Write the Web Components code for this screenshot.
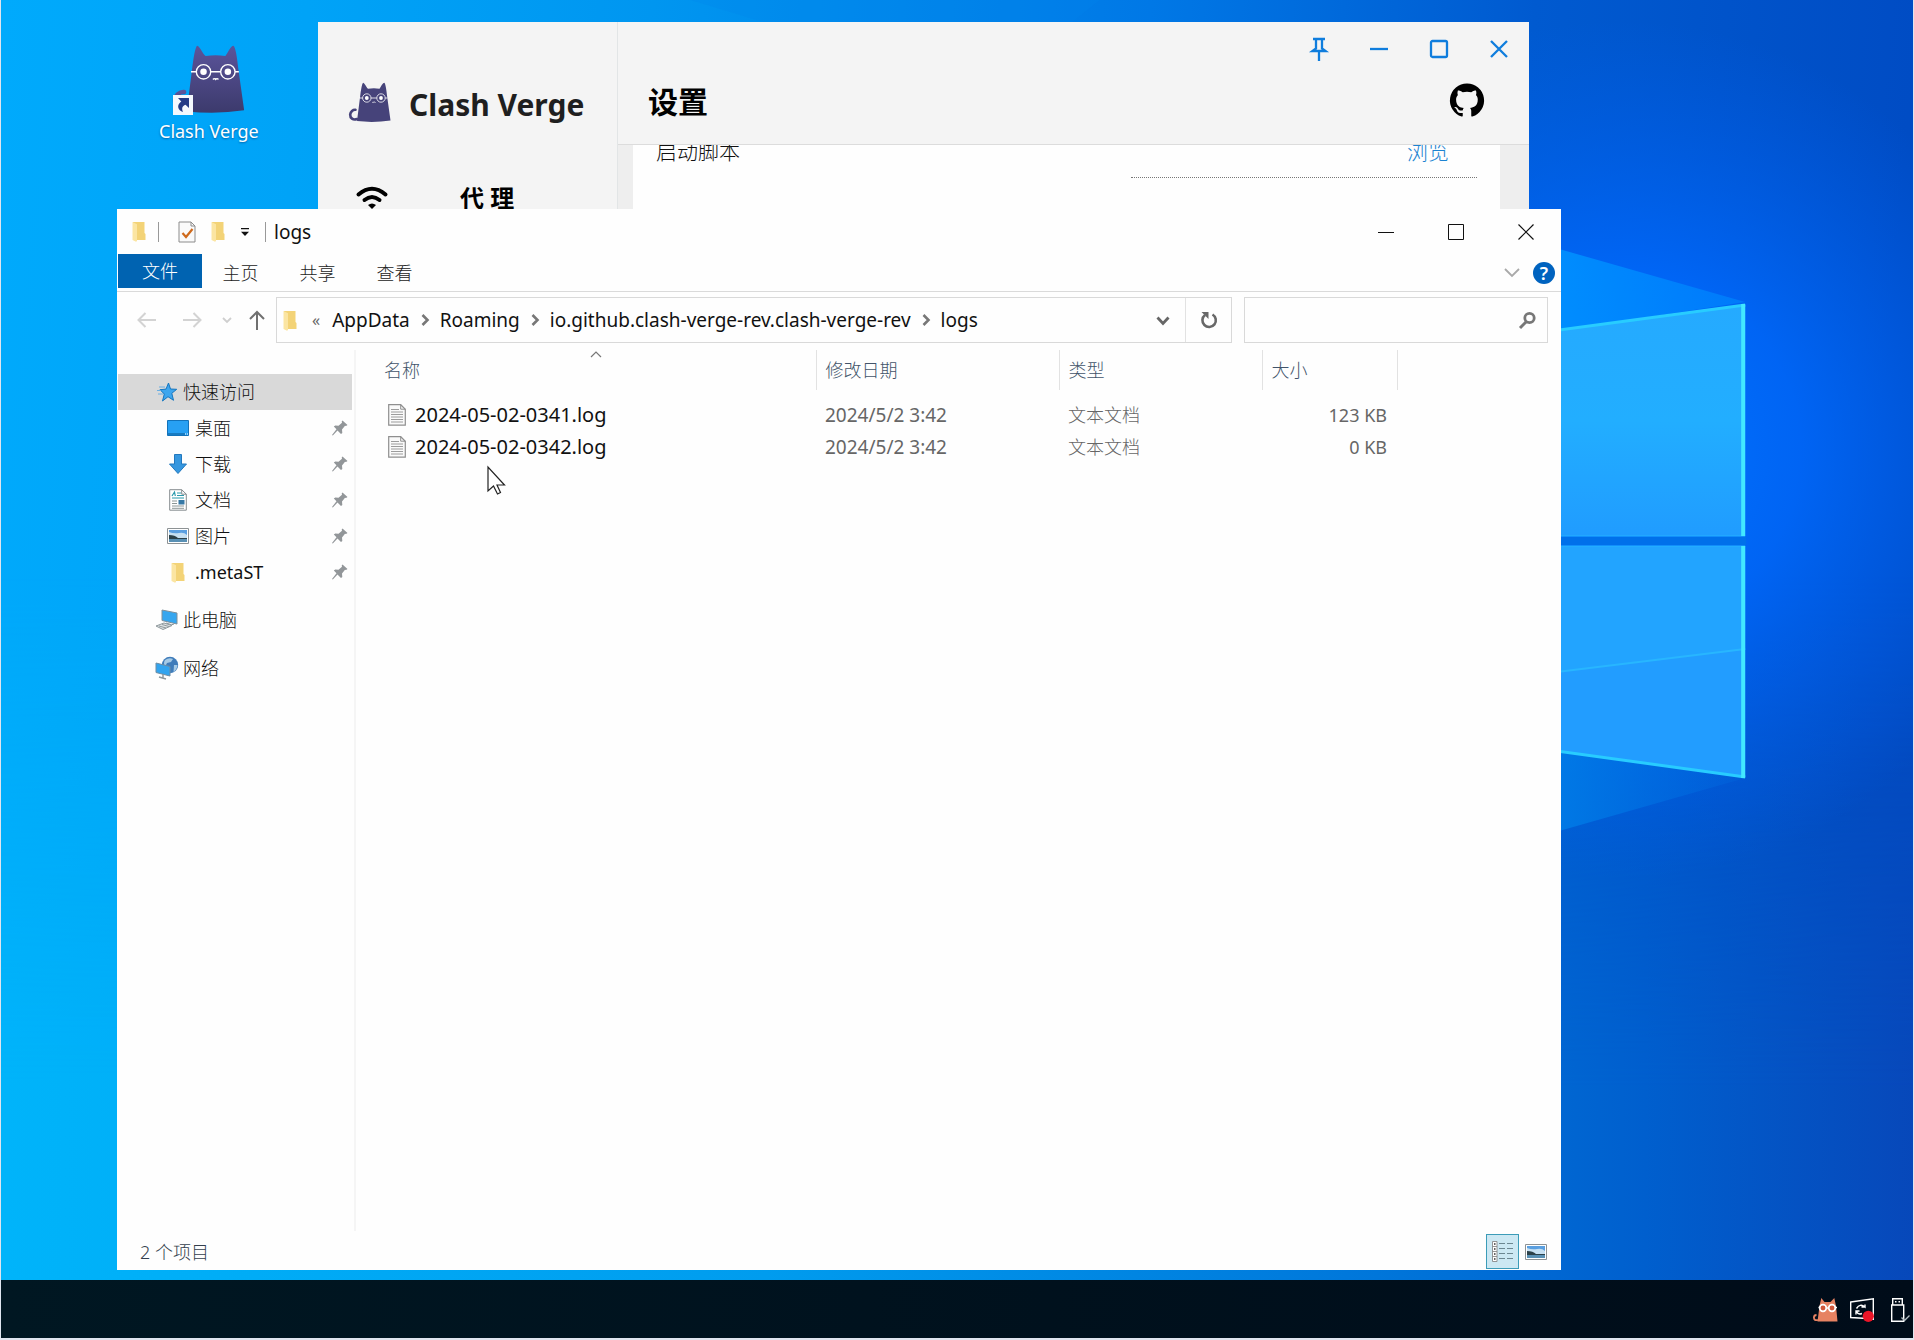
<!DOCTYPE html>
<html lang="zh-CN">
<head>
<meta charset="utf-8">
<meta name="viewport" content="width=device-width, initial-scale=1">
<title>logs</title>
<style>
  html, body { margin: 0; height: 100%; }
  body {
    font-family: "Noto Sans", "Noto Sans CJK SC", sans-serif;
    font-size: 18px;
    line-height: 24px;
    color: #111;
    overflow: hidden;
  }
</style>
</head>
<body>
<desk-top>
  <desktop-shortcut slot="icons" label="Clash Verge"></desktop-shortcut>
  <clash-window slot="back"></clash-window>
  <explorer-window slot="front" title-text="logs"></explorer-window>
</desk-top>

<script>
const CAT = (body, extra = "") => `<svg viewBox="0 0 42 40">${extra}
  <path d="M8 36.500C4 38 1 35.500 1.200 32 1.500 29 4 27 6.500 27.300" fill="none" stroke="${body}" stroke-width="2.600" stroke-linecap="round"/>
  <path d="M14 .3C15.600.3 17 4.500 19 6.300Q25 5.400 30.500 6.300C32 4.500 33.500.3 35.300.3 36.500 1 37.500 8 38 13L41.500 38Q25 40.500 8 38.600L11 15Q12.500 2 14 .3Z" fill="${body}"/>
  <g fill="none" stroke="#fff" stroke-width=".8"><circle cx="17.800" cy="15.500" r="4.200"/><circle cx="32" cy="15.500" r="4.200"/><path d="M10.500 15.500h3M22 15.500h5.800M36.200 15.500h2.200M23.300 20q.8-1 1.600 0 .8-1 1.600 0"/></g>
  <g fill="#fff"><circle cx="17.800" cy="15.500" r="1.900"/><circle cx="32" cy="15.500" r="1.900"/></g></svg>`;

const PICTURE = `<svg viewBox="0 0 22 16"><path d="M.5.500h21v15H.5z" fill="#fff" stroke="#8d9294"/><path d="M2 2h18v12H2z" fill="#5a9fe0"/><path d="M2 4q5 2 10 1t8 2v3H2z" fill="#c6e0f2"/><path d="M2 7q6 0 9 3h9v1H2z" fill="#2c4149"/><path d="M2 11h18v3H2z" fill="#5990b4"/></svg>`;

const ICONS = {
  cat: CAT("#46437a"),
  catOrange: `<svg viewBox="0 0 25 24"><path d="M5 22Q1 23 .9 19.500 1 17 3.500 17" fill="none" stroke="#e68262" stroke-width="1.800"/><path d="M8.300 0L11.500 4h6L21.300 0 23 8l1.500 15.500H4.500L6.500 8z" fill="#e68262"/><g fill="#d0563a" stroke="#fff" stroke-width="1.700"><circle cx="10" cy="10" r="3.300"/><circle cx="19" cy="10" r="3.300"/></g><path d="M13.300 10h2.400M5.500 9.500h1.500M22 9.500h2" stroke="#fff" stroke-width="1.500"/></svg>`,
  catDesktop: CAT("url(#fur)", `<linearGradient id="fur" x2="0" y2="1"><stop stop-color="#5b549b"/><stop offset="1" stop-color="#3c3a6c"/></linearGradient>`),
  shortcut: `<svg viewBox="0 0 20 20"><path d="M0 0h20v20H0z" fill="#f4f8fd"/><path d="M5 3h11v10l-3.500-3.200C9 11 8.500 13.500 10 17 5 15.500 3 10 8.300 6.500z" fill="#243b86"/></svg>`,
  folder: `<svg viewBox="0 0 14 21"><path d="M1 1h11.500v11l1 1v6H1z" fill="#f3d377"/><path d="M.5 1L5 3.200V20l-1 .8L.5 19z" fill="#fbe5a2"/></svg>`,
  check: `<svg viewBox="0 0 18 22"><path d="M1 1h12l4 4v16H1z" fill="#fafafa" stroke="#8c8c8c"/><path d="M13 1v4h4" fill="none" stroke="#8c8c8c"/><path d="M4.500 12l3.500 4 6.500-8" fill="none" stroke="#cf6a1c" stroke-width="2.200"/></svg>`,
  customize: `<svg viewBox="0 0 10 8"><path d="M1 0h8v1.300H1zM1 3.800h8L5 8z" fill="#111"/></svg>`,
  minimize: `<svg viewBox="0 0 16 16"><path d="M0 8.500h16" stroke="#111"/></svg>`,
  maximize: `<svg viewBox="0 0 16 16"><path d="M.5.500h15v15H.5z" fill="none" stroke="#111"/></svg>`,
  close: `<svg viewBox="0 0 16 16"><path d="M.5.500l15 15M15.500.500l-15 15" stroke="#111" stroke-width="1.200"/></svg>`,
  pinBlue: `<svg viewBox="0 0 18 24"><path d="M3 2h12M6 2v9.500L2.500 14h13L12 11.500V2M9 14.500V24" fill="none" stroke="#0f7ddd" stroke-width="2.300"/></svg>`,
  minBlue: `<svg viewBox="0 0 18 18"><path d="M0 9h18" stroke="#0f7ddd" stroke-width="2.300"/></svg>`,
  maxBlue: `<svg viewBox="0 0 18 18"><rect x="1" y="1" width="16" height="16" rx="1.500" fill="none" stroke="#0f7ddd" stroke-width="2.300"/></svg>`,
  closeBlue: `<svg viewBox="0 0 18 18"><path d="M1 1l16 16M17 1L1 17" stroke="#0f7ddd" stroke-width="2.300"/></svg>`,
  github: `<svg viewBox="0 0 24 24"><path d="M12 .3a12 12 0 0 0-3.800 23.400c.6.1.8-.3.8-.6v-2c-3.300.7-4-1.600-4-1.600-.6-1.400-1.400-1.800-1.400-1.800-1-.7.1-.7.1-.7 1.200 0 1.900 1.200 1.900 1.200 1 1.800 2.800 1.300 3.500 1 0-.8.400-1.300.7-1.600-2.700-.3-5.500-1.300-5.500-6 0-1.200.5-2.300 1.300-3.100-.2-.4-.6-1.600 0-3.200 0 0 1-.3 3.400 1.200a11.500 11.500 0 0 1 6 0c2.300-1.500 3.300-1.200 3.300-1.200.6 1.600.2 2.800 0 3.200.9.800 1.300 1.900 1.300 3.200 0 4.600-2.800 5.600-5.500 5.900.5.400.9 1 .9 2.200v3.300c0 .3.100.7.8.6A12 12 0 0 0 12 .3" fill="#000"/></svg>`,
  wifi: `<svg viewBox="0 0 32 24"><g fill="none" stroke="#000" stroke-width="4" stroke-linecap="round"><path d="M2.500 8.500Q16-3 29.500 8.500"/><path d="M8.500 14Q16 8 23.500 14"/></g><path d="M12 19q4-3 8 0l-4 4z"/></svg>`,
  back: `<svg viewBox="0 0 20 16"><path d="M19 8H2M8.500 1L1.500 8l7 7" fill="none" stroke="#d3d3d3" stroke-width="2"/></svg>`,
  forward: `<svg viewBox="0 0 20 16"><path d="M1 8h17M11.500 1l7 7-7 7" fill="none" stroke="#d3d3d3" stroke-width="2"/></svg>`,
  recent: `<svg viewBox="0 0 10 6"><path d="M1 1l4 4 4-4" fill="none" stroke="#cfcfcf" stroke-width="1.800"/></svg>`,
  up: `<svg viewBox="0 0 16 20"><path d="M8 20V2M1 9l7-7 7 7" fill="none" stroke="#707070" stroke-width="2"/></svg>`,
  crumb: `<svg viewBox="0 0 8 12"><path d="M1.500 1l5 5-5 5" fill="none" stroke="#777" stroke-width="2.600"/></svg>`,
  drop: `<svg viewBox="0 0 14 9"><path d="M1.500 1.500L7 7.500l5.500-6" fill="none" stroke="#666" stroke-width="2.800"/></svg>`,
  refresh: `<svg viewBox="0 0 18 18"><path d="M12.500 3.500A6.700 6.700 0 1 1 5 4" fill="none" stroke="#686868" stroke-width="2.600"/><path d="M1.500 1h7v7z" fill="#686868"/></svg>`,
  search: `<svg viewBox="0 0 17 17"><circle cx="10.500" cy="6" r="4.700" fill="none" stroke="#777" stroke-width="2.800"/><path d="M7.500 9.500L1 16" stroke="#777" stroke-width="3"/></svg>`,
  expand: `<svg viewBox="0 0 16 9"><path d="M1 1l7 7 7-7" fill="none" stroke="#a9a9a9" stroke-width="1.800"/></svg>`,
  sort: `<svg viewBox="0 0 12 7"><path d="M1 6l5-5 5 5" fill="none" stroke="#777" stroke-width="1.200"/></svg>`,
  star: `<svg viewBox="0 0 20 20"><path d="M11.500 1l2 6 6.200.3-4.900 4 1.700 7-5.500-3.600L5.500 19l1.800-7L3 7.700l6-.6z" fill="#3ea6ee" stroke="#1576bf"/><path d="M2 5h6M0 8.500h4M1 12h5" stroke="#6aaee2"/></svg>`,
  desktop: `<svg viewBox="0 0 22 16"><path d="M.5.500h21v15H.5z" fill="#27a0f3" stroke="#1272ba"/><path d="M1 14h17" stroke="#0b568f"/><path d="M18 14h3" stroke="#fff" stroke-dasharray="1 1"/></svg>`,
  download: `<svg viewBox="0 0 18 20"><path d="M5.500.500h7v9.500h5L9 19.500.5 10h5z" fill="#3697df" stroke="#2278be"/></svg>`,
  document: `<svg viewBox="0 0 18 22"><path d="M.7.700h12l4.600 4.500v16H.7z" fill="#fff" stroke="#858c8f"/><path d="M12.700.700v4.500h4.600" fill="none" stroke="#858c8f"/><path d="M3 7l2.500-4 .8 4M8 4h4M8 6.500h7M3 9h12" fill="none" stroke="#2a99ac" stroke-width="1.200"/><path d="M3 12h5M3 14.500h5M3 17h12M3 19.300h12" stroke="#8c9696"/><path d="M9.500 11h6v4.500h-6z" fill="#3679a6"/></svg>`,
  picture: PICTURE,
  pc: `<svg viewBox="0 0 24 22"><path d="M7 1l15 3v11L7 11.500z" fill="#36a6ef" stroke="#80909a"/><path d="M11 14l5 1.500M13 17l6-2" stroke="#87949b"/><path d="M1 17l8-3 8 2.500-9 4z" fill="#dfe3e4" stroke="#8f999d"/><path d="M4 17l7 2M7 15.500l7 2" stroke="#8f999d"/></svg>`,
  network: `<svg viewBox="0 0 24 24"><circle cx="15" cy="9" r="8.200" fill="#3f7cba"/><path d="M10 4q4-3 8-1l-2 3-4 1-2 4q-2-4 0-7M19 9l3.500 0q-.5 5-4 7z" fill="#a5cae6"/><path d="M1 7l14 3.500V20L1 16.500z" fill="#32a4ef" stroke="#6c8da5"/><path d="M8 18v4M4 21l7 2" stroke="#8d989d" stroke-width="1.500"/></svg>`,
  pin: `<svg viewBox="0 0 16 16"><path d="M10.500.5l5 4.500-1.500 1-1-.3-3 3.800.3 3.500-1.300 1-3.500-3.500L.8 15.500 0 15l4.500-5.800L1.800 6.500l1.500-1 3.200.2 3.500-3-.3-1.200z" fill="#929699"/></svg>`,
  log: `<svg viewBox="0 0 18 22"><path d="M.7.700h12l4.600 4.500v16H.7z" fill="#fafafa" stroke="#8f8f8f" stroke-width="1.200"/><path d="M12.700.700v4.500h4.600" fill="none" stroke="#8f8f8f"/><path d="M3 5.500h8M3 8h12M3 10.500h12M3 13h12M3 15.500h12M3 18h12" stroke="#9c9c9c"/></svg>`,
  details: `<svg viewBox="0 0 21 21"><g fill="#fff" stroke="#888" stroke-width=".9"><path d="M.5.500h4.500v20H.5zM.5 5.500H5M.5 10.500H5M.5 15.500H5"/></g><path d="M2 3h1.500M2 8h1.500M2 13h1.500M2 18h1.500" stroke="#333" stroke-width="1.500"/><path d="M7 2.500h6M15 2.500h6M7 7.500h6M15 7.500h6M7 12.500h6M15 12.500h6M7 17.500h6M15 17.500h6" stroke="#6c8791"/></svg>`,
  update: `<svg viewBox="0 0 24 24"><path d="M.7 4L23.300.8v20.500L13 20.200.7 19.500z" fill="none" stroke="#fff" stroke-width="1.400"/><path d="M6.500 10.500Q10 5 15 9V6.500M15 9h-3.500M6 16.500V13h3.500M6.500 13.500Q8 17 12 15.500" fill="none" stroke="#fff" stroke-width="1.400"/><circle cx="18.300" cy="18.300" r="5.600" fill="#ea1528"/></svg>`,
  usb: `<svg viewBox="0 0 19 24"><path d="M1.700 7V.7h9.600V7M.7 7h12v16.300H.7z" fill="none" stroke="#fff" stroke-width="1.400"/><path d="M4 3.800h1.500M7.500 3.800H9" stroke="#fff" stroke-width="1.500"/><path d="M10.500 19.500l3 3L18.500 17.500" fill="none" stroke="#b3bdc2" stroke-width="1.400"/></svg>`,
  cursor: `<svg viewBox="0 0 19 29"><path d="M1 1v24l5.500-5 4 8 3-1.500-3.500-7.500H17.500z" fill="#fff" stroke="#222" stroke-width="1.200"/></svg>`
};

// <ui-icon name="folder" w="14" h="21">
class UiIcon extends HTMLElement {
  constructor() {
    super();
    this.attachShadow({ mode: "open" });
  }

  connectedCallback() {
    const w = this.getAttribute("w") || 16;
    const h = this.getAttribute("h") || w;
    this.shadowRoot.innerHTML = `
      <style>
        :host { display: inline-flex; flex: none; }
        svg { display: block; width: ${w}px; height: ${h}px; overflow: visible; }
      </style>
      ${ICONS[this.getAttribute("name")]}
    `;
    this.setAttribute("aria-hidden", "true");
  }
}
customElements.define("ui-icon", UiIcon);

class WallPaper extends HTMLElement {
  constructor() {
    super();
    this.attachShadow({ mode: "open" }).innerHTML = `
      <style>
        :host { display: block; }
        svg { display: block; width: 100%; height: 100%; }
      </style>
      <svg viewBox="0 0 1914 1280" preserveAspectRatio="none" aria-hidden="true">
        <defs>
          <linearGradient id="sky" x2="1" y2=".06">
            <stop stop-color="#00aafc"/><stop offset=".16" stop-color="#00a3f7"/>
            <stop offset=".34" stop-color="#0096f0"/><stop offset=".6" stop-color="#0078e6"/>
            <stop offset=".8" stop-color="#005ad0"/><stop offset="1" stop-color="#004cc4"/>
          </linearGradient>
          <linearGradient id="floor" x2="1">
            <stop stop-color="#00b4fa"/><stop offset=".4" stop-color="#009cee"/>
            <stop offset=".72" stop-color="#0076da"/><stop offset=".86" stop-color="#005fce"/>
            <stop offset="1" stop-color="#0748ba"/>
          </linearGradient>
          <linearGradient id="fade" x2="0" y2="1">
            <stop offset=".45" stop-color="#fff" stop-opacity="0"/><stop offset=".85" stop-color="#fff"/>
          </linearGradient>
          <mask id="low"><path d="M0 0h1914v1280H0z" fill="url(#fade)"/></mask>
          <radialGradient id="glow" gradientUnits="userSpaceOnUse" cx="1620" cy="450" r="430">
            <stop stop-color="#0074ff"/><stop offset=".42" stop-color="#0068fc" stop-opacity=".85"/>
            <stop offset="1" stop-color="#0060f0" stop-opacity="0"/>
          </radialGradient>
          <linearGradient id="pane" x2="0" y2="1">
            <stop stop-color="#25aaff"/><stop offset=".5" stop-color="#22aeff"/><stop offset="1" stop-color="#209cff"/>
          </linearGradient>
          <linearGradient id="beam" gradientUnits="userSpaceOnUse" x1="1500" x2="1746">
            <stop stop-color="#0094ff"/><stop offset="1" stop-color="#0088ff" stop-opacity=".6"/>
          </linearGradient>
          <linearGradient id="beam2" gradientUnits="userSpaceOnUse" x1="1500" x2="1746">
            <stop stop-color="#0084ea"/><stop offset="1" stop-color="#0070e4" stop-opacity=".2"/>
          </linearGradient>
        </defs>
        <path d="M0 0h1914v1280H0z" fill="url(#sky)"/>
        <path d="M0 0h1914v1280H0z" fill="url(#floor)" mask="url(#low)"/>
        <path d="M1180 0h734v1000h-734z" fill="url(#glow)"/>
        <path d="M690 0L790 30 1000 80 1100 0z" fill="#0084ea" opacity=".25"/>
        <path d="M1500 232L1746 302 1500 340z" fill="url(#beam)"/>
        <path d="M1500 742L1746 778 1500 848z" fill="url(#beam2)"/>
        <path d="M1500 338L1746 305V536H1500z" fill="url(#pane)"/>
        <path d="M1500 546H1746V777L1500 743z" fill="#229dff"/>
        <path d="M1500 546H1746V649L1500 679z" fill="#22a6ff" opacity=".7"/>
        <path d="M1500 679L1746 649" stroke="#28b6ff" stroke-width="2"/>
        <path d="M1500 338L1746 305M1500 743L1746 777" stroke="#28ccff" stroke-width="3"/>
        <path d="M1500 536h246M1500 546h246" stroke="#22b4ff"/>
        <path d="M1744 304v232M1744 546v232" stroke="#42e8ff" stroke-width="4"/>
        <path d="M1500 537h247v8h-247z" fill="#0070ea"/>
      </svg>
    `;
  }
}
customElements.define("wall-paper", WallPaper);

class DesktopShortcut extends HTMLElement {
  constructor() {
    super();
    this.attachShadow({ mode: "open" });
  }

  connectedCallback() {
    this.shadowRoot.innerHTML = `
      <style>
        :host { display: block; }
        button {
          display: flex; flex-direction: column; align-items: center; gap: 4px;
          padding: 0; border: 0; background: none; color: #fff; font: inherit;
          text-shadow: 0 1px 2px #0060a8;
        }
        .art { position: relative; display: flex; }
        .badge { position: absolute; left: 0; bottom: 0; }
      </style>
      <button type="button">
        <span class="art">
          <ui-icon name="catDesktop" w="72" h="71"></ui-icon>
          <ui-icon class="badge" name="shortcut" w="20"></ui-icon>
        </span>
        <span>${this.getAttribute("label")}</span>
      </button>
    `;
  }
}
customElements.define("desktop-shortcut", DesktopShortcut);

class ClashWindow extends HTMLElement {
  constructor() {
    super();
    this.attachShadow({ mode: "open" }).innerHTML = `
      <style>
        :host { display: grid; grid-template-columns: 300px 1fr; background: #f4f4f4; color: #000; }
        button { border: 0; padding: 0; background: none; font: inherit; color: inherit; }
        aside { border-right: 1px solid #e2e5e6; box-sizing: border-box; }
        .logo { display: flex; align-items: flex-start; gap: 18px; height: 164px; padding: 60px 0 0 31px; box-sizing: border-box; }
        .logo strong { font-size: 30px; line-height: 46px; color: #1f1f1f; }
        .nav { display: flex; align-items: center; width: 100%; padding-left: 38px; gap: 72px; font-size: 24px; line-height: 20px; font-weight: 700; }
        main { display: flex; flex-direction: column; min-width: 0; }
        .top { z-index: 1; background: #f4f4f4; border-bottom: 1px solid #dcdcdc; }
        .bar { display: flex; justify-content: flex-end; height: 54px; }
        .bar button { display: flex; justify-content: center; align-items: center; width: 60px; }
        header { display: flex; justify-content: space-between; align-items: center; height: 52px; padding: 0 45px 16px 30px; }
        h1 { margin: 0; font-size: 30px; line-height: 40px; }
        .page { flex: 1; padding: 0 29px 0 15px; background: #eee; }
        .card { display: flex; flex-direction: column; height: 100%; padding: 0 23px; background: #fefefe; }
        .row { display: flex; justify-content: space-between; margin-top: -8px; font-size: 21px; line-height: 28px; color: #111; font-weight: 300; }
        .row a { color: #1c83d1; text-decoration: none; padding-right: 28px; }
        .field { width: 346px; height: 12px; margin-left: auto; border-bottom: 1px dotted #777; }
      </style>
      <aside>
        <div class="logo"><ui-icon name="cat" w="42" h="41"></ui-icon><strong>Clash Verge</strong></div>
        <button type="button" class="nav"><ui-icon name="wifi" w="32" h="24"></ui-icon><span>代 理</span></button>
      </aside>
      <main>
        <div class="top">
          <div class="bar">
            <button type="button" aria-label="置顶"><ui-icon name="pinBlue" w="18" h="24"></ui-icon></button>
            <button type="button" aria-label="最小化"><ui-icon name="minBlue" w="18"></ui-icon></button>
            <button type="button" aria-label="最大化"><ui-icon name="maxBlue" w="18"></ui-icon></button>
            <button type="button" aria-label="关闭"><ui-icon name="closeBlue" w="18"></ui-icon></button>
          </div>
          <header><h1>设置</h1><button type="button" aria-label="GitHub"><ui-icon name="github" w="34"></ui-icon></button></header>
        </div>
        <div class="page"><div class="card">
          <div class="row"><span>启动脚本</span><a href="#">浏览</a></div>
          <div class="field"></div>
        </div></div>
      </main>
    `;
  }
}
customElements.define("clash-window", ClashWindow);

// One entry of the navigation pane. "sub" indents it and adds the pin.
class NavItem extends HTMLElement {
  constructor() {
    super();
    this.attachShadow({ mode: "open" });
  }

  connectedCallback() {
    const [w, h] = this.getAttribute("size").split(" ");
    this.shadowRoot.innerHTML = `
      <style>
        :host { display: block; padding-right: 2px; }
        :host([gap]) { margin-top: 12px; }
        a { display: flex; align-items: center; gap: 5px; height: 36px; padding: 0 4px 0 38px; color: #111; text-decoration: none; }
        :host([sub]) a { padding-left: 49px; gap: 6px; }
        :host([selected]) a { background: #d9d9d9; }
        .art { display: flex; justify-content: center; width: 22px; }
        .text { flex: 1; }
      </style>
      <a href="#">
        <span class="art"><ui-icon name="${this.getAttribute("icon")}" w="${w}" h="${h}"></ui-icon></span>
        <span class="text"><slot></slot></span>
        ${this.hasAttribute("sub") ? `<ui-icon name="pin" w="16"></ui-icon>` : ""}
      </a>
    `;
  }
}
customElements.define("nav-item", NavItem);

class AddressBar extends HTMLElement {
  constructor() {
    super();
    this.attachShadow({ mode: "open" });
  }

  connectedCallback() {
    const path = this.getAttribute("path").split("/");
    this.shadowRoot.innerHTML = `
      <style>
        :host { display: flex; align-items: center; height: 46px; padding: 5px 13px 7px 20px; }
        button { display: flex; align-items: center; justify-content: center; padding: 0; border: 0; background: none; font: inherit; color: inherit; }
        .nav { display: flex; align-items: center; width: 139px; }
        .nav button:nth-child(2) { margin-left: 25px; }
        .nav button:nth-child(3) { margin-left: 20px; }
        .nav button:nth-child(4) { margin-left: 17px; }
        .box { display: flex; align-items: center; height: 44px; border: 1px solid #d9d9d9; }
        .path { flex: 1; min-width: 0; padding-left: 6px; }
        .back { margin: 0 12px 0 15px; font-size: 16px; color: #666; }
        .crumbs { display: flex; align-items: center; gap: 11px; flex: 1; font-size: 19px; white-space: nowrap; }
        .refresh { width: 46px; height: 44px; border-left: 1px solid #e2e2e2; }
        .drop { width: 44px; height: 44px; }
        .search { width: 302px; margin-left: 12px; }
        .search input { flex: 1; min-width: 0; height: 40px; padding: 0 10px; border: 0; outline: 0; background: none; font: inherit; }
        .search button { width: 40px; height: 44px; }
      </style>
      <div class="nav">
        <button type="button" aria-label="后退"><ui-icon name="back" w="20" h="16"></ui-icon></button>
        <button type="button" aria-label="前进"><ui-icon name="forward" w="20" h="16"></ui-icon></button>
        <button type="button" aria-label="最近浏览的位置"><ui-icon name="recent" w="10" h="6"></ui-icon></button>
        <button type="button" aria-label="上移"><ui-icon name="up" w="16" h="20"></ui-icon></button>
      </div>
      <div class="box path">
        <ui-icon name="folder" w="14" h="21"></ui-icon>
        <span class="back">«</span>
        <div class="crumbs">
          ${path.map(p => `<button type="button">${p}</button>`).join(`<ui-icon name="crumb" w="8" h="12"></ui-icon>`)}
        </div>
        <button type="button" class="drop" aria-label="历史记录"><ui-icon name="drop" w="14" h="9"></ui-icon></button>
        <button type="button" class="refresh" aria-label="刷新"><ui-icon name="refresh" w="18"></ui-icon></button>
      </div>
      <div class="box search">
        <input type="text" aria-label="搜索">
        <button type="button" aria-label="搜索"><ui-icon name="search" w="17"></ui-icon></button>
      </div>
    `;
  }
}
customElements.define("address-bar", AddressBar);

const FILES = [
  { name: "2024-05-02-0341.log", date: "2024/5/2 3:42", type: "文本文档", size: "123 KB" },
  { name: "2024-05-02-0342.log", date: "2024/5/2 3:42", type: "文本文档", size: "0 KB" }
];

class FileTable extends HTMLElement {
  constructor() {
    super();
    this.attachShadow({ mode: "open" });
  }

  connectedCallback() {
    this.shadowRoot.innerHTML = `
      <style>
        :host { display: block; }
        table { border-collapse: collapse; table-layout: fixed; }
        th { position: relative; height: 40px; padding: 0 0 0 9px; box-sizing: border-box; border-right: 1px solid #e2e2e2; text-align: left; font-weight: 300; color: #42546a; }
        th:first-child { padding-left: 28px; }
        th ui-icon { position: absolute; top: 1px; left: 51%; }
        tbody::before { content: ""; display: block; height: 9px; }
        td { height: 32px; padding: 0 0 0 9px; color: #666; }
        td:first-child { padding-left: 32px; color: #111; font-size: 20px; }
        td:nth-child(2) { font-size: 19px; }
        td:nth-child(3) { font-weight: 300; }
        td:last-child { text-align: right; padding-right: 10px; }
        .name { display: flex; align-items: center; gap: 9px; }
      </style>
      <table>
        <colgroup><col style="width:460px"><col style="width:243px"><col style="width:203px"><col style="width:135px"></colgroup>
        <thead><tr><th>名称<ui-icon name="sort" w="12" h="7"></ui-icon></th><th>修改日期</th><th>类型</th><th>大小</th></tr></thead>
        <tbody>
          ${FILES.map(f => `<tr>
            <td><span class="name"><ui-icon name="log" w="18" h="22"></ui-icon><span>${f.name}</span></span></td>
            <td>${f.date}</td><td>${f.type}</td><td>${f.size}</td>
          </tr>`).join("")}
        </tbody>
      </table>
    `;
  }
}
customElements.define("file-table", FileTable);

class ExplorerWindow extends HTMLElement {
  constructor() {
    super();
    this.attachShadow({ mode: "open" });
  }

  connectedCallback() {
    this.shadowRoot.innerHTML = `
      <style>
        :host { display: flex; flex-direction: column; background: #fefefe; }
        button { display: flex; align-items: center; justify-content: center; padding: 0; border: 0; background: none; font: inherit; color: inherit; }
        .title { display: flex; align-items: center; height: 45px; padding-left: 15px; }
        .title i { width: 1px; height: 20px; background: #999; }
        .quick { display: flex; align-items: center; }
        .quick i { margin: 0 19px 0 12px; }
        .quick button { margin-right: 15px; }
        .title .edge { margin-right: 8px; }
        .name { flex: 1; font-size: 19px; }
        .caption { width: 70px; height: 45px; }
        .tabs { display: flex; align-items: center; height: 37px; border-bottom: 1px solid #dadada; padding-left: 1px; font-weight: 300; }
        .tabs button { width: 77px; height: 37px; color: #222; }
        .tabs .file { align-self: flex-start; width: 84px; height: 34px; background: #0063b1; color: #fff; }
        .tabs span { flex: 1; }
        .tabs .expand { width: 20px; }
        .tabs .help { width: 22px; height: 22px; margin: 0 6px 0 11px; border-radius: 50%; background: #0063bf; color: #fff; font-size: 18px; line-height: 22px; font-weight: 600; }
        .body { flex: 1; display: grid; grid-template-columns: 239px 1fr; min-height: 0; }
        nav { padding: 24px 0 0 1px; border-right: 2px solid #f5f5f5; box-sizing: border-box; font-weight: 300; }
        .latin { font-weight: 400; }
        footer { display: flex; align-items: center; height: 37px; padding: 2px 14px 0 23px; color: #333f4d; font-weight: 300; }
        footer span { flex: 1; }
        footer .on { width: 33px; height: 35px; margin-right: 6px; box-sizing: border-box; border: 1px solid #3c9cb8; background: #cce8f3; }
      </style>
      <div class="title">
        <div class="quick">
          <ui-icon name="folder" w="14" h="21"></ui-icon><i></i>
          <button type="button" aria-label="属性"><ui-icon name="check" w="18" h="22"></ui-icon></button>
          <button type="button" aria-label="新建文件夹"><ui-icon name="folder" w="14" h="21"></ui-icon></button>
          <button type="button" aria-label="自定义快速访问工具栏"><ui-icon name="customize" w="10" h="8"></ui-icon></button>
        </div>
        <i class="edge"></i>
        <span class="name">${this.getAttribute("title-text")}</span>
        <button type="button" class="caption" aria-label="最小化"><ui-icon name="minimize" w="16"></ui-icon></button>
        <button type="button" class="caption" aria-label="最大化"><ui-icon name="maximize" w="16"></ui-icon></button>
        <button type="button" class="caption" aria-label="关闭"><ui-icon name="close" w="16"></ui-icon></button>
      </div>
      <div class="tabs">
        <button type="button" class="file">文件</button>
        <button type="button">主页</button>
        <button type="button">共享</button>
        <button type="button">查看</button>
        <span></span>
        <button type="button" class="expand" aria-label="展开功能区"><ui-icon name="expand" w="16" h="9"></ui-icon></button>
        <button type="button" class="help">?</button>
      </div>
      <address-bar path="AppData/Roaming/io.github.clash-verge-rev.clash-verge-rev/logs"></address-bar>
      <div class="body">
        <nav>
          <nav-item icon="star" size="20 20" selected>快速访问</nav-item>
          <nav-item icon="desktop" size="22 16" sub>桌面</nav-item>
          <nav-item icon="download" size="18 20" sub>下载</nav-item>
          <nav-item icon="document" size="18 22" sub>文档</nav-item>
          <nav-item icon="picture" size="22 16" sub>图片</nav-item>
          <nav-item icon="folder" size="14 21" sub class="latin">.metaST</nav-item>
          <nav-item icon="pc" size="24 22" gap>此电脑</nav-item>
          <nav-item icon="network" size="24 24" gap>网络</nav-item>
        </nav>
        <file-table></file-table>
      </div>
      <footer>
        <span>2 个项目</span>
        <button type="button" class="on" aria-label="详细信息"><ui-icon name="details" w="21"></ui-icon></button>
        <button type="button" aria-label="大缩略图"><ui-icon name="picture" w="22" h="16"></ui-icon></button>
      </footer>
    `;
  }
}
customElements.define("explorer-window", ExplorerWindow);

class TaskBar extends HTMLElement {
  constructor() {
    super();
    this.attachShadow({ mode: "open" }).innerHTML = `
      <style>
        :host { display: flex; justify-content: flex-end; align-items: center; gap: 12px; height: 56px; padding: 2px 3px 0 0; background: linear-gradient(90deg, #001722, #000c19); }
        button { display: flex; padding: 0; border: 0; background: none; }
        button:last-child { margin-left: 5px; }
      </style>
      <button type="button" aria-label="Clash Verge"><ui-icon name="catOrange" w="25" h="24"></ui-icon></button>
      <button type="button" aria-label="Windows 更新"><ui-icon name="update" w="24"></ui-icon></button>
      <button type="button" aria-label="安全删除硬件"><ui-icon name="usb" w="19" h="24"></ui-icon></button>
    `;
  }
}
customElements.define("task-bar", TaskBar);

class DeskTop extends HTMLElement {
  constructor() {
    super();
    this.attachShadow({ mode: "open" }).innerHTML = `
      <style>
        :host {
          display: flex; flex-direction: column; height: 100vh; box-sizing: border-box;
          border: solid #dfe5ef; border-width: 0 1px 2px; overflow: hidden;
        }
        .area { position: relative; flex: 1; min-height: 0; }
        wall-paper { height: 100%; }
        ::slotted(*) { position: absolute; }
        ::slotted([slot="icons"]) { left: 158px; top: 44px; }
        ::slotted([slot="back"]) { left: 317px; right: 384px; top: 22px; height: 240px; }
        ::slotted([slot="front"]) { left: 116px; right: 352px; top: 209px; bottom: 10px; }
        .cursor { position: absolute; left: 486px; top: 466px; }
      </style>
      <div class="area">
        <wall-paper></wall-paper>
        <slot name="icons"></slot>
        <slot name="back"></slot>
        <slot name="front"></slot>
        <ui-icon class="cursor" name="cursor" w="19" h="29"></ui-icon>
      </div>
      <task-bar></task-bar>
    `;
  }
}
customElements.define("desk-top", DeskTop);
</script>
</body>
</html>
